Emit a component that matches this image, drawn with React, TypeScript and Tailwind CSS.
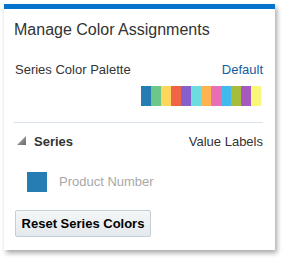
import React from 'react';

const palette = [
  '#267db3',
  '#6dc68a',
  '#fdd75c',
  '#f26446',
  '#8660cc',
  '#6ddcdc',
  '#fdb34e',
  '#e96fb4',
  '#41bbec',
  '#a7bc3a',
  '#a55abf',
  '#f8f77a',
];

export default function App() {
  return (
    <div
      className="w-[283px] h-[259px] bg-white pt-[4px] pl-[4px]"
      style={{ fontFamily: '"Liberation Sans", Arial, sans-serif' }}
    >
      <div className="w-[271px] h-[246px] bg-white border-t-[5px] border-[#0572ce] shadow-[2px_3px_5px_rgba(0,0,0,0.35)] pl-[10px] pr-[12px] pt-[11px]">
        {/* Title */}
        <h1 className="text-[16px] leading-[20px] text-[#333333]">Manage Color Assignments</h1>

        {/* Palette */}
        <div className="mt-[22px] flex items-center justify-between text-[13px] leading-[16px]">
          <span className="text-[#333333] pl-[1px]">Series Color Palette</span>
          <span className="text-[#145c9e]">Default</span>
        </div>
        <div className="mt-[8px] flex justify-end pr-[2px]">
          {palette.map((c) => (
            <div key={c} className="w-[10px] h-[20px]" style={{ backgroundColor: c }} />
          ))}
        </div>

        <div className="mt-[16px] h-px bg-[#d9e2ea]" />

        {/* Series header */}
        <div className="mt-[11px] flex items-center justify-between text-[13px] leading-[16px]">
          <div className="flex items-center gap-[8px] pl-[3px]">
            <svg width="9" height="9" viewBox="0 0 9 9" className="mt-[-4px]">
              <defs>
                <linearGradient id="tri" x1="0" y1="0" x2="1" y2="1">
                  <stop offset="0" stopColor="#b4b4b4" />
                  <stop offset="1" stopColor="#6a6a6a" />
                </linearGradient>
              </defs>
              <polygon points="9,0 9,9 0,9" fill="url(#tri)" />
            </svg>
            <span className="font-bold text-[#333333]">Series</span>
          </div>
          <span className="text-[#333333]">Value Labels</span>
        </div>

        {/* Series item */}
        <div className="mt-[22px] flex items-center gap-[12px] pl-[13px]">
          <div className="w-[20px] h-[20px] bg-[#267db3]" />
          <span className="text-[13px] leading-[16px] text-[#a8a8a8]">Product Number</span>
        </div>

        {/* Reset button */}
        <button className="mt-[18px] ml-[1px] h-[27px] w-[136px] border border-[#c4ced6] rounded-[2px] bg-gradient-to-b from-[#f4f6f7] to-[#e4e9ec] text-[13px] font-bold text-[#000000] flex items-center justify-center">
          Reset Series Colors
        </button>
      </div>
    </div>
  );
}
